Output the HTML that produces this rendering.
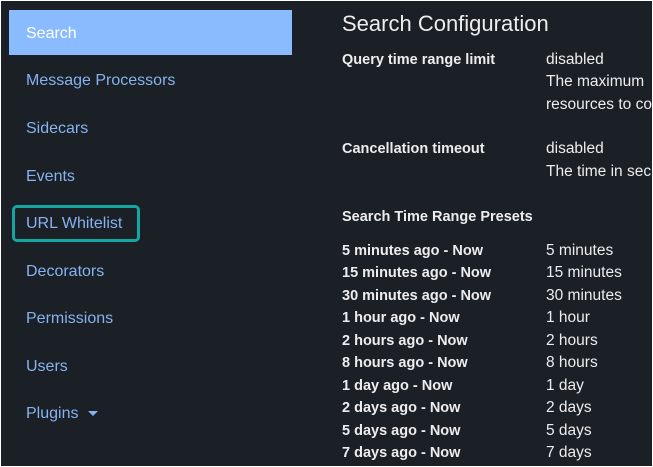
<!DOCTYPE html><html><head><style>
body{margin:0;width:653px;height:467px;overflow:hidden;background:#fff;font-family:"Liberation Sans",sans-serif}
.f{position:absolute;left:1px;top:1px;width:651px;height:465px;background:#1b1f26;overflow:hidden}
.s{position:absolute;left:25px;font-size:16px;color:#86b3ef;transform:translateY(-50%)}
.act{position:absolute;left:8px;top:9px;width:283px;height:45px;background:#8bbbff}
.t{position:absolute;color:#ededed;white-space:nowrap;transform:translateY(-50%)}
.b{font-weight:bold;font-size:14.5px;left:341px}
.v{font-size:15.5px;left:545px}
</style></head><body><div class="f">
<div class="act"></div>
<div class="s" style="top:33px;color:#fff">Search</div>
<div class="s" style="top:80px">Message Processors</div>
<div class="s" style="top:128px">Sidecars</div>
<div class="s" style="top:176px">Events</div>
<div style="position:absolute;left:11px;top:204px;width:122px;height:31px;border:3px solid #13a6a3;border-radius:5px"></div>
<div class="s" style="top:223px">URL Whitelist</div>
<div class="s" style="top:271px">Decorators</div>
<div class="s" style="top:318px">Permissions</div>
<div class="s" style="top:366px">Users</div>
<div class="s" style="top:413px">Plugins <span style="display:inline-block;width:0;height:0;border-left:5px solid transparent;border-right:5px solid transparent;border-top:5px solid #86b3ef;margin-left:5px;vertical-align:middle"></span></div>
<div class="t" style="left:341px;top:23px;font-size:22px">Search Configuration</div>
<div class="t b" style="top:59px">Query time range limit</div>
<div class="t v" style="top:59px">disabled</div>
<div class="t v" style="top:81px">The maximum</div>
<div class="t v" style="top:104px">resources to co</div>
<div class="t b" style="top:148px">Cancellation timeout</div>
<div class="t v" style="top:148px">disabled</div>
<div class="t v" style="top:171px">The time in sec</div>
<div class="t b" style="top:216px">Search Time Range Presets</div>
<div class="t b" style="top:250px">5 minutes ago - Now</div><div class="t v" style="top:250px">5 minutes</div>
<div class="t b" style="top:272px">15 minutes ago - Now</div><div class="t v" style="top:272px">15 minutes</div>
<div class="t b" style="top:295px">30 minutes ago - Now</div><div class="t v" style="top:295px">30 minutes</div>
<div class="t b" style="top:317px">1 hour ago - Now</div><div class="t v" style="top:317px">1 hour</div>
<div class="t b" style="top:340px">2 hours ago - Now</div><div class="t v" style="top:340px">2 hours</div>
<div class="t b" style="top:362px">8 hours ago - Now</div><div class="t v" style="top:362px">8 hours</div>
<div class="t b" style="top:385px">1 day ago - Now</div><div class="t v" style="top:385px">1 day</div>
<div class="t b" style="top:407px">2 days ago - Now</div><div class="t v" style="top:407px">2 days</div>
<div class="t b" style="top:430px">5 days ago - Now</div><div class="t v" style="top:430px">5 days</div>
<div class="t b" style="top:452px">7 days ago - Now</div><div class="t v" style="top:452px">7 days</div>
</div></body></html>
